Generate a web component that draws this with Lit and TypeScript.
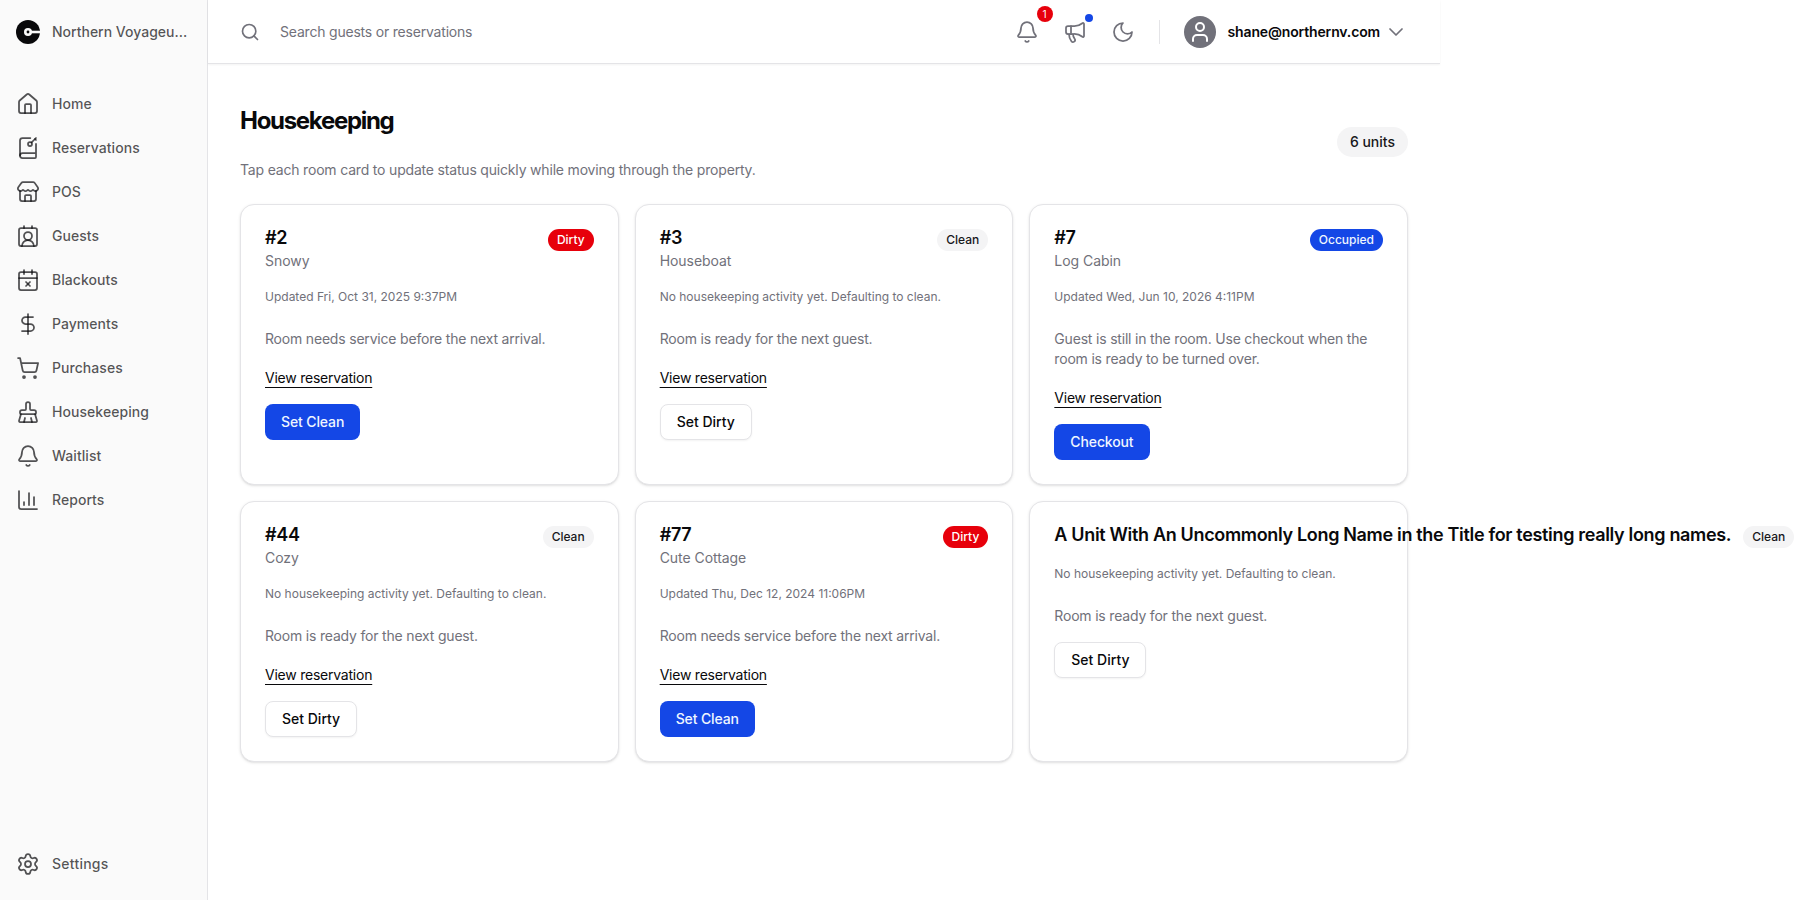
import { LitElement, html, css, svg, nothing, TemplateResult } from 'lit';
import { customElement, property } from 'lit/decorators.js';

type Status = 'dirty' | 'clean' | 'occupied';

interface Unit {
    name: string;
    subtitle?: string;
    status: Status;
    updated: string;
    reservation: boolean;
}

const ICONS: Record<string, TemplateResult> = {
    home: svg`<path d="M15 21v-8a1 1 0 0 0-1-1h-4a1 1 0 0 0-1 1v8"/><path d="M3 10a2 2 0 0 1 .709-1.528l7-6a2 2 0 0 1 2.582 0l7 6A2 2 0 0 1 21 10v9a2 2 0 0 1-2 2H5a2 2 0 0 1-2-2z"/>`,
    book: svg`<path d="m19 3 1 1"/><path d="m20 2-4.5 4.5"/><path d="M20 7.898V21a1 1 0 0 1-1 1H6.5a1 1 0 0 1 0-5H20"/><path d="M4 19.5v-15A2.5 2.5 0 0 1 6.5 2h7.844"/><circle cx="14" cy="8" r="2"/>`,
    store: svg`<path d="M15 21v-5a1 1 0 0 0-1-1h-4a1 1 0 0 0-1 1v5"/><path d="M17.774 10.31a1.12 1.12 0 0 0-1.549 0 2.5 2.5 0 0 1-3.451 0 1.12 1.12 0 0 0-1.548 0 2.5 2.5 0 0 1-3.452 0 1.12 1.12 0 0 0-1.549 0 2.5 2.5 0 0 1-3.77-3.248l2.889-4.184A2 2 0 0 1 7 2h10a2 2 0 0 1 1.653.873l2.895 4.192a2.5 2.5 0 0 1-3.774 3.244"/><path d="M4 10.95V19a2 2 0 0 0 2 2h12a2 2 0 0 0 2-2v-8.05"/>`,
    contact: svg`<path d="M16 2v2"/><path d="M17.915 22a6 6 0 0 0-12 0"/><path d="M8 2v2"/><circle cx="12" cy="12" r="4"/><rect x="3" y="4" width="18" height="18" rx="2"/>`,
    calendar: svg`<path d="M8 2v4"/><path d="M16 2v4"/><rect x="3" y="4" width="18" height="18" rx="2"/><path d="M3 10h18"/><path d="m14 14-4 4"/><path d="m10 14 4 4"/>`,
    dollar: svg`<path d="M12 2v20"/><path d="M17 5H9.5a3.5 3.5 0 0 0 0 7h5a3.5 3.5 0 0 1 0 7H6"/>`,
    cart: svg`<circle cx="8" cy="21" r="1"/><circle cx="19" cy="21" r="1"/><path d="M2.05 2.05h2l2.66 12.42a2 2 0 0 0 2 1.58h9.78a2 2 0 0 0 1.95-1.57l1.65-7.43H5.12"/>`,
    brush: svg`<path d="m16 22-1-4"/><path d="M19 14a1 1 0 0 0 1-1v-1a2 2 0 0 0-2-2h-3a1 1 0 0 1-1-1V4a2 2 0 0 0-4 0v5a1 1 0 0 1-1 1H6a2 2 0 0 0-2 2v1a1 1 0 0 0 1 1"/><path d="M19 14H5l-1.973 6.767A1 1 0 0 0 4 22h16a1 1 0 0 0 .973-1.233z"/><path d="m8 22 1-4"/>`,
    bell: svg`<path d="M10.268 21a2 2 0 0 0 3.464 0"/><path d="M3.262 15.326A1 1 0 0 0 4 17h16a1 1 0 0 0 .74-1.673C19.41 13.956 18 12.499 18 8A6 6 0 0 0 6 8c0 4.499-1.411 5.956-2.738 7.326"/>`,
    chart: svg`<path d="M3 3v16a2 2 0 0 0 2 2h16"/><path d="M18 17V9"/><path d="M13 17V5"/><path d="M8 17v-3"/>`,
    settings: svg`<path d="M9.671 4.136a2.34 2.34 0 0 1 4.659 0 2.34 2.34 0 0 0 3.319 1.915 2.34 2.34 0 0 1 2.33 4.033 2.34 2.34 0 0 0 0 3.831 2.34 2.34 0 0 1-2.33 4.033 2.34 2.34 0 0 0-3.319 1.915 2.34 2.34 0 0 1-4.659 0 2.34 2.34 0 0 0-3.32-1.915 2.34 2.34 0 0 1-2.33-4.033 2.34 2.34 0 0 0 0-3.831A2.34 2.34 0 0 1 6.35 6.051a2.34 2.34 0 0 0 3.319-1.915"/><circle cx="12" cy="12" r="3"/>`,
    megaphone: svg`<path d="M11 6a13 13 0 0 0 8.4-2.8A1 1 0 0 1 21 4v12a1 1 0 0 1-1.6.8A13 13 0 0 0 11 14H5a2 2 0 0 1-2-2V8a2 2 0 0 1 2-2z"/><path d="M6 14a12 12 0 0 0 2.4 7.2 2 2 0 0 0 3.2-2.4A8 8 0 0 1 10 14"/><path d="M8 6v8"/>`,
    moon: svg`<path d="M12 3a6 6 0 0 0 9 9 9 9 0 1 1-9-9Z"/>`,
    search: svg`<circle cx="11" cy="11" r="8"/><path d="m21 21-4.3-4.3"/>`,
    user: svg`<path d="M19 21v-2a4 4 0 0 0-4-4H9a4 4 0 0 0-4 4v2"/><circle cx="12" cy="7" r="4"/>`,
    chevron: svg`<path d="m6 9 6 6 6-6"/>`
};

const NAV = [
    { icon: 'home', label: 'Home' },
    { icon: 'book', label: 'Reservations' },
    { icon: 'store', label: 'POS' },
    { icon: 'contact', label: 'Guests' },
    { icon: 'calendar', label: 'Blackouts' },
    { icon: 'dollar', label: 'Payments' },
    { icon: 'cart', label: 'Purchases' },
    { icon: 'brush', label: 'Housekeeping' },
    { icon: 'bell', label: 'Waitlist' },
    { icon: 'chart', label: 'Reports' }
];

const NO_ACTIVITY = 'No housekeeping activity yet. Defaulting to clean.';

const UNITS: Unit[] = [
    { name: '#2', subtitle: 'Snowy', status: 'dirty', updated: 'Updated Fri, Oct 31, 2025 9:37PM', reservation: true },
    { name: '#3', subtitle: 'Houseboat', status: 'clean', updated: NO_ACTIVITY, reservation: true },
    { name: '#7', subtitle: 'Log Cabin', status: 'occupied', updated: 'Updated Wed, Jun 10, 2026 4:11PM', reservation: true },
    { name: '#44', subtitle: 'Cozy', status: 'clean', updated: NO_ACTIVITY, reservation: true },
    { name: '#77', subtitle: 'Cute Cottage', status: 'dirty', updated: 'Updated Thu, Dec 12, 2024 11:06PM', reservation: true },
    { name: 'A Unit With An Uncommonly Long Name in the Title for testing really long names.', status: 'clean', updated: NO_ACTIVITY, reservation: false }
];

const STATUS = {
    dirty: { label: 'Dirty', message: 'Room needs service before the next arrival.', action: 'Set Clean' },
    clean: { label: 'Clean', message: 'Room is ready for the next guest.', action: 'Set Dirty' },
    occupied: { label: 'Occupied', message: 'Guest is still in the room. Use checkout when the room is ready to be turned over.', action: 'Checkout' }
};

/**
 * Stroke icon, sized by --icon-size
 */
@customElement('nv-icon')
export class NvIcon extends LitElement {
    @property() name = '';

    static styles = css`
        :host {
            display: block;
            flex: none;
            width: var(--icon-size, 24px);
            height: var(--icon-size, 24px);
        }

        svg {
            display: block;
            width: 100%;
            height: 100%;
            fill: none;
            stroke: currentColor;
            stroke-width: var(--icon-stroke, 1.75);
            stroke-linecap: round;
            stroke-linejoin: round;
        }
    `;

    render() {
        return html`<svg viewBox="0 0 24 24" aria-hidden="true">${ICONS[this.name]}</svg>`;
    }
}

/**
 * Room card with status badge and quick action
 */
@customElement('nv-unit-card')
export class NvUnitCard extends LitElement {
    @property({ attribute: false }) unit!: Unit;

    static styles = css`
        :host {
            display: block;
            min-width: 0;
        }

        .card {
            box-sizing: border-box;
            height: 100%;
            padding: 24px;
            background: #fff;
            border: 1px solid #e4e4e7;
            border-radius: 14px;
            box-shadow: 0 1px 3px rgba(0, 0, 0, 0.1), 0 1px 2px -1px rgba(0, 0, 0, 0.1);
        }

        .top {
            display: flex;
            align-items: flex-start;
            justify-content: space-between;
            gap: 12px;
        }

        .name {
            margin: 0;
            font-size: 18px;
            line-height: 18px;
            font-weight: 600;
            letter-spacing: -0.33px;
            white-space: nowrap;
        }

        .subtitle {
            margin-top: 4px;
        }

        .subtitle,
        .message {
            font-size: 14px;
            line-height: 20px;
            letter-spacing: -0.19px;
            color: #71717a;
        }

        .subtitle {
            letter-spacing: -0.05px;
        }

        .badge {
            flex: none;
            box-sizing: border-box;
            height: 22px;
            padding: 3px 9px;
            border-radius: 11px;
            font-size: 12px;
            line-height: 16px;
            font-weight: 500;
        }

        .badge.dirty {
            background: #e7000b;
            color: #fff;
        }

        .badge.clean {
            background: #f4f4f5;
            color: #18181b;
        }

        .badge.occupied {
            background: #1447e6;
            color: #eff6ff;
        }

        .updated {
            margin-top: 18px;
            font-size: 12px;
            line-height: 16px;
            color: #71717a;
        }

        .message {
            margin-top: 24px;
        }

        .link {
            display: block;
            width: fit-content;
            margin-top: 19px;
            font-size: 14px;
            line-height: 20px;
            letter-spacing: -0.23px;
            color: #09090b;
            text-decoration: underline;
            text-decoration-thickness: 1px;
            text-underline-offset: 4px;
        }

        .action {
            display: block;
            box-sizing: border-box;
            height: 36px;
            margin-top: 16px;
            padding: 0 16px;
            border: none;
            border-radius: 8px;
            background: #1447e6;
            color: #eff6ff;
            font: 500 14px/20px Inter, sans-serif;
            letter-spacing: -0.12px;
        }

        .action.outline {
            background: #fff;
            border: 1px solid #e4e4e7;
            color: #09090b;
            letter-spacing: 0;
            box-shadow: 0 1px 2px rgba(0, 0, 0, 0.05);
        }
    `;

    render() {
        const { name, subtitle, status, updated, reservation } = this.unit;
        const info = STATUS[status];

        return html`
            <article class="card">
                <div class="top">
                    <div>
                        <h2 class="name">${name}</h2>
                        ${subtitle ? html`<div class="subtitle">${subtitle}</div>` : nothing}
                    </div>
                    <span class="badge ${status}">${info.label}</span>
                </div>
                <div class="updated">${updated}</div>
                <div class="message">${info.message}</div>
                ${reservation ? html`<a class="link">View reservation</a>` : nothing}
                <button class="action ${status === 'clean' ? 'outline' : ''}">${info.action}</button>
            </article>
        `;
    }
}

@customElement('app-root')
export class AppRoot extends LitElement {
    static styles = css`
        :host {
            display: flex;
            width: 1440px;
            height: 900px;
            background: #fff;
            color: #09090b;
            font-family: Inter, sans-serif;
            font-size: 14px;
            line-height: 20px;
        }

        .sidebar {
            box-sizing: border-box;
            flex: none;
            display: flex;
            flex-direction: column;
            width: 208px;
            padding: 16px 0 14px;
            background: #fafafa;
            border-right: 1px solid #e4e4e7;
            color: rgba(9, 9, 11, 0.7);
            font-weight: 500;
            letter-spacing: 0.05px;
        }

        .brand,
        .item {
            display: flex;
            align-items: center;
            gap: 12px;
            padding: 0 16px;
        }

        .brand {
            height: 32px;
            margin-bottom: 34px;
            letter-spacing: 0;
        }

        .brand svg {
            flex: none;
            width: 24px;
            height: 24px;
        }

        .brand-name {
            white-space: nowrap;
        }

        .item {
            height: 44px;
        }

        .settings {
            margin-top: auto;
            letter-spacing: 0.25px;
        }

        .main {
            flex: 1;
            min-width: 0;
        }

        .header {
            box-sizing: border-box;
            display: flex;
            align-items: center;
            height: 64px;
            padding: 0 32px;
            border-bottom: 1px solid #e4e4e7;
            box-shadow: 0 1px 2px rgba(0, 0, 0, 0.05);
            color: #71717a;
        }

        .search {
            flex: 1;
            display: flex;
            align-items: center;
            gap: 20px;
            letter-spacing: -0.2px;
            --icon-size: 20px;
            --icon-stroke: 2;
        }

        .tools {
            display: flex;
            align-items: center;
            gap: 24px;
        }

        .tool {
            position: relative;
        }

        .count,
        .dot {
            position: absolute;
            border-radius: 50%;
        }

        .count {
            top: -14px;
            right: -14px;
            width: 16px;
            height: 16px;
            background: #e7000b;
            color: #fff;
            font-size: 10px;
            line-height: 16px;
            text-align: center;
        }

        .dot {
            top: -6px;
            right: -6px;
            width: 8px;
            height: 8px;
            background: #1447e6;
        }

        .divider {
            width: 1px;
            height: 24px;
            background: #e4e4e7;
        }

        .avatar {
            display: flex;
            align-items: center;
            justify-content: center;
            width: 32px;
            height: 32px;
            border-radius: 50%;
            background: #71717a;
            color: #fff;
            --icon-stroke: 2;
        }

        .user {
            display: flex;
            align-items: center;
        }

        .email {
            margin: 0 4px 0 12px;
            color: #09090b;
            font-weight: 600;
            letter-spacing: -0.15px;
        }

        .content {
            padding: 40px 32px;
        }

        .heading {
            display: flex;
            align-items: center;
            justify-content: space-between;
            margin-bottom: 24px;
        }

        .title {
            margin: 0 0 23px;
            padding-top: 1px;
            font-size: 24px;
            line-height: 32px;
            font-weight: 700;
            letter-spacing: -1.3px;
        }

        .lead {
            color: #71717a;
            letter-spacing: -0.185px;
        }

        .total {
            padding: 5px 13px;
            border-radius: 15px;
            background: #f4f4f5;
            color: #18181b;
            font-weight: 500;
        }

        .grid {
            display: grid;
            grid-template-columns: repeat(3, minmax(0, 1fr));
            gap: 16px;
        }
    `;

    render() {
        return html`
            <nav class="sidebar">
                <div class="brand">
                    <svg viewBox="0 0 24 24">
                        <circle cx="12" cy="12" r="12" fill="#09090b" />
                        <path d="M12 12H24" stroke="#fafafa" stroke-width="2.6" />
                        <circle cx="12" cy="12" r="4" fill="#fafafa" />
                        <circle cx="12" cy="12" r="1.4" fill="#09090b" />
                    </svg>
                    <span class="brand-name">Northern Voyageu...</span>
                </div>
                ${NAV.map((n) => html`<div class="item"><nv-icon name=${n.icon}></nv-icon>${n.label}</div>`)}
                <div class="item settings"><nv-icon name="settings"></nv-icon>Settings</div>
            </nav>
            <div class="main">
                <header class="header">
                    <div class="search"><nv-icon name="search"></nv-icon>Search guests or reservations</div>
                    <div class="tools">
                        <div class="tool"><nv-icon name="bell"></nv-icon><span class="count">1</span></div>
                        <div class="tool"><nv-icon name="megaphone"></nv-icon><span class="dot"></span></div>
                        <nv-icon name="moon"></nv-icon>
                        <div class="divider"></div>
                        <div class="user">
                            <div class="avatar"><nv-icon name="user"></nv-icon></div>
                            <span class="email">shane@northernv.com</span>
                            <nv-icon name="chevron"></nv-icon>
                        </div>
                    </div>
                </header>
                <main class="content">
                    <div class="heading">
                        <div>
                            <h1 class="title">Housekeeping</h1>
                            <div class="lead">Tap each room card to update status quickly while moving through the property.</div>
                        </div>
                        <span class="total">${UNITS.length} units</span>
                    </div>
                    <div class="grid">
                        ${UNITS.map((unit) => html`<nv-unit-card .unit=${unit}></nv-unit-card>`)}
                    </div>
                </main>
            </div>
        `;
    }
}
